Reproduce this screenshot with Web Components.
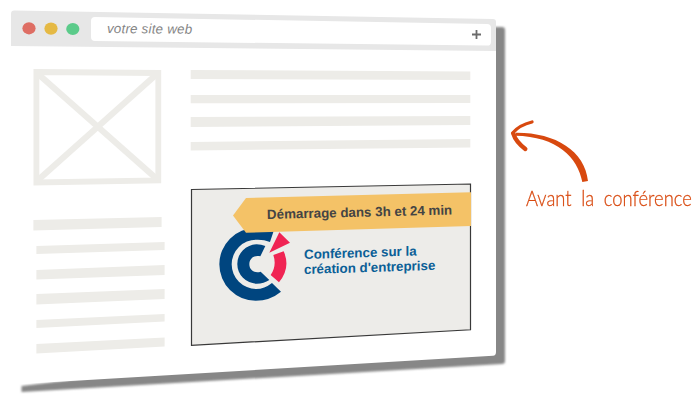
<!DOCTYPE html>
<html lang="fr">
<head>
<meta charset="utf-8">
<title>Avant la conférence</title>
<style>
html,body{margin:0;height:400px;background:#fff;overflow:hidden}
body{display:flex;font:13.333px/15px "Liberation Sans",Arial,sans-serif}
</style>
</head>
<body>
<mock-window>
  <mock-toolbar slot="bar">votre site web</mock-toolbar>
  <div slot="side">
    <image-box></image-box>
    <skeleton-line shape="3 13.5 0 10" style="margin:32px 0 0"></skeleton-line>
    <skeleton-line shape="4 12 0 8" style="margin:11px 0 0 3px"></skeleton-line>
    <skeleton-line shape="5 14.5 0 10" style="margin:11px 0 0 3px"></skeleton-line>
    <skeleton-line shape="5 15.5 0 10" style="margin:9px 0 0 3px"></skeleton-line>
    <skeleton-line shape="6 14 0 7.5" style="margin:9px 0 0 3px"></skeleton-line>
    <skeleton-line shape="7 16.5 .5 9.5" style="margin:9px 0 0 3px"></skeleton-line>
  </div>
  <div slot="main">
    <skeleton-line wide shape="0 9 1.5 10" style="margin:1px 0 0"></skeleton-line>
    <skeleton-line wide shape="0 8.3 0 8" style="margin:15px 0 0"></skeleton-line>
    <skeleton-line wide shape="1 11 0 9" style="margin:12px 0 0"></skeleton-line>
    <skeleton-line wide shape="3 11.5 0 8.5" style="margin:12px 0 0"></skeleton-line>
    <conference-card>
      <span slot="ribbon">Démarrage dans 3h et 24 min</span>
      <span slot="title">Conférence sur la<br>création d'entreprise</span>
    </conference-card>
  </div>
</mock-window>
<arrow-note>Avant la conférence</arrow-note>

<template id="t-window">
<style>
:host{display:block;position:relative;width:510px;height:400px;flex:none}
.back{position:absolute;inset:0}
.content{position:relative;display:flex;flex-direction:column}
.cols{display:grid;grid-template-columns:131px 281px;column-gap:26px;padding:17px 0 0 33px}
</style>
<svg class="back" width="510" height="400" viewBox="0 0 510 400" style="overflow:visible">
  <defs><filter id="soft" x="-5%" y="-5%" width="110%" height="110%"><feGaussianBlur stdDeviation="1.3"/></filter></defs>
  <path d="M400 27H502Q505 27 505 30V361Q505 364 502 364L21.500 392V386L400 340Z" fill="#878787" filter="url(#soft)"/>
  <path d="M11 14Q11 10.5 14 10.6L493 19Q496 19 496 22V352Q496 355.500 493 355.700L20 384Z" fill="#fff"/>
</svg>
<div class="content"><slot name="bar"></slot><div class="cols"><slot name="side"></slot><slot name="main"></slot></div></div>
</template>

<template id="t-toolbar">
<style>
:host{display:flex;position:relative;height:52px;color:#858585;font-style:italic}
svg{position:absolute;inset:0}
.url{position:relative;margin:21px 0 0 107px;height:17px;white-space:nowrap;letter-spacing:.22px;transform:rotate(.5deg);transform-origin:0 50%}
</style>
<svg width="510" height="52">
  <path d="M11 14Q11 10.500 14.500 10.600L493 19Q496 19 496 22V51L11 46Z" fill="#e7e7e7"/>
  <path d="M91 21Q91 17 95 17L487 24Q491 24 491 28V42Q491 45.700 487 45.600L95 41Q91 41 91 37Z" fill="#fff"/>
  <ellipse cx="29" cy="28.300" rx="6.600" ry="6.100" fill="#de6e64"/>
  <ellipse cx="51" cy="28.600" rx="6.600" ry="6.100" fill="#e5b944"/>
  <ellipse cx="72.800" cy="29" rx="6.600" ry="6.100" fill="#5bcb8a"/>
  <path d="M472 34.500H481M476.500 30V39" stroke="#6b6b6b" stroke-width="1.800"/>
</svg>
<div class="url"><slot></slot></div>
</template>

<template id="t-image">
<style>:host{display:block;width:129px;height:116px}svg{display:block;overflow:visible}</style>
<svg width="129" height="116" fill="none" stroke="#edece8">
  <path d="M3.400 3L125.300 4V111.300L3.400 113.500Z" stroke-width="5.800"/>
  <path d="M4 4L125 111M125 4L4 112" stroke-width="6.200"/>
</svg>
</template>

<template id="t-card">
<style>
:host{display:block;position:relative;width:282px;height:164px;margin-top:32px;font-weight:bold}
svg{position:absolute;left:0;top:0}
.text{position:relative;display:flex;flex-direction:column;white-space:nowrap}
.rib{color:#444;height:15px;margin:24px 0 0 77px;transform:rotate(-1.400deg);transform-origin:0 50%}
.title{color:#0b5f97;height:30px;margin:25px 0 0 114px;transform:skewY(-1.800deg);transform-origin:0 50%}
</style>
<svg width="282" height="164" viewBox="190 183 282 164">
  <path d="M191.500 189.500L470.500 184V329.800L191.500 345.300Z" fill="#edece9" stroke="#393939" stroke-width="1.200"/>
  <g transform="translate(210 220) scale(.3333)">
    <path fill="#00457f" d="M192 30L180 66Q161 58 139 59A74 74 0 0 0 65 133A74 74 0 0 0 139 207Q163 207 186 189L213 215Q180 242 137 242A109 109 0 0 1 28 133A109 109 0 0 1 137 24Q165 21 192 30Z"/>
    <path fill="#00457f" d="M166 78L151 109C132 104 118 117 118 133C118 151 135 161 152 155L178 180Q162 191 140 191A58.500 58.500 0 0 1 82 132A58.500 58.500 0 0 1 140 73Q154 73 166 78Z"/>
    <path fill="#f02453" d="M208 37L240 68L178 98ZM190 105L221 94Q243 143 207 187L182 165Q201 137 190 105Z"/>
  </g>
  <path d="M233 215.500L246 198L471 192.300V226L246 232.700Z" fill="#f4c267"/>
</svg>
<div class="text"><div class="rib"><slot name="ribbon"></slot></div><div class="title"><slot name="title"></slot></div></div>
</template>

<template id="t-note">
<style>
:host{display:flex;flex-direction:column;width:190px;height:400px;color:#d8490f}
svg{display:block;margin-top:115px;overflow:visible}
.label{font:300 20px/24px Lato,sans-serif;margin:1px 0 0 16px;white-space:nowrap;word-spacing:5px;-webkit-text-stroke:.25px #d8490f;transform:scale(.92,1.050);transform-origin:0 80%}
</style>
<svg width="90" height="70" viewBox="510 115 90 70">
  <g transform="translate(490 100) scale(.3333)" stroke-linecap="round" stroke-linejoin="round">
    <path fill="#d8490f" d="M277 246C263 172 202 109 75 107L78 98C195 97 285 152 294 243Z"/>
    <path fill="none" stroke="#d8490f" stroke-width="10" d="M126 66Q88 75 68 99"/>
    <path fill="none" stroke="#d8490f" stroke-width="13" d="M70 101Q77 125 106 147"/>
  </g>
</svg>
<div class="label"><slot></slot></div>
</template>

<script>
function define(name, id){
  customElements.define(name, class extends HTMLElement{
    constructor(){
      super();
      this.attachShadow({mode:'open'}).append(document.getElementById(id).content.cloneNode(true));
    }
  });
}
define('mock-window','t-window');
define('mock-toolbar','t-toolbar');
define('image-box','t-image');
define('conference-card','t-card');
define('arrow-note','t-note');

// shape: left top, left bottom, right top, right bottom
customElements.define('skeleton-line', class extends HTMLElement{
  connectedCallback(){
    const [a,b,c,d] = this.getAttribute('shape').split(' ').map(Number);
    const wide = this.hasAttribute('wide');
    const w = wide ? 280 : 129, x = wide ? .7 : .4, r = w + (wide ? .3 : -.4);
    const h = Math.ceil(Math.max(b,d));
    this.attachShadow({mode:'open'}).innerHTML =
      `<style>:host{display:block;width:${w}px;height:${h}px}
      svg{display:block;overflow:visible}</style>
      <svg width="${w}" height="${h}"><path fill="#edece8" d="M${x} ${a}L${r} ${c}V${d}L${x} ${b}Z"/></svg>`;
  }
});
</script>
</body>
</html>
